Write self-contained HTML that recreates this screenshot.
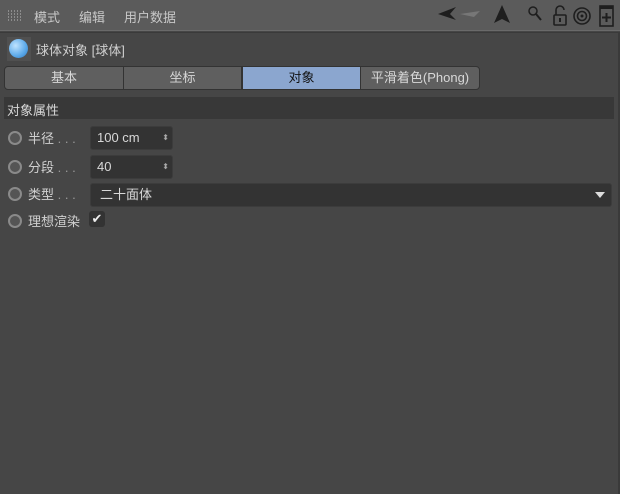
<!DOCTYPE html>
<html><head><meta charset="utf-8"><style>
*{margin:0;padding:0;box-sizing:border-box}
body{width:620px;height:494px;background:#464646;font-family:"Liberation Sans","Noto Sans CJK SC",sans-serif;font-size:12px;color:#d4d4d4;position:relative;overflow:hidden}
.abs{position:absolute}
.menu{left:0;top:0;width:620px;height:31px;background:#5b5b5b;border-bottom:1px solid #6a6a6a}
.menu span{position:absolute;top:7px;color:#c8c8c8;font-size:13px}
.tab{position:absolute;top:66px;height:24px;background:#5f5f5f;border:1px solid #333;text-align:center;line-height:22px;color:#d8d8d8;font-size:13px}
.lbl{position:absolute;left:28px;font-size:13px;color:#d0d0d0}
.radio{position:absolute;left:8px;width:14px;height:14px;border-radius:50%;border:2px solid #8a8a8a;background:#555}
.field{position:absolute;left:90px;height:24px;background:#333;border-radius:3px;border:1px solid #3c3c3c;color:#d8d8d8;font-size:13px;line-height:22px;padding-left:6px}
</style></head><body>
<div class="abs menu">
 <div class="abs" style="left:8px;top:9px;width:14px;height:13px;background:repeating-linear-gradient(90deg,#999 0 1px,transparent 1px 3px),#5b5b5b;opacity:.8"></div>
 <div class="abs" style="left:8px;top:9px;width:14px;height:13px;background:repeating-linear-gradient(0deg,#5b5b5b 0 1px,transparent 1px 3px)"></div>
 <span style="left:34px">模式</span><span style="left:79px">编辑</span><span style="left:124px">用户数据</span>
 <svg class="abs" style="left:430px;top:4px" width="190" height="26">
  <path d="M8 10 L26 3 L20 10 L26 16Z" fill="#1e1e1e"/>
  <path d="M30 10 L50 7 L44 13Z" fill="#777"/>
  <path d="M72 1 L80 19 L72 15 L64 19Z" fill="#1e1e1e"/>
  <circle cx="103" cy="7" r="4" fill="none" stroke="#1e1e1e" stroke-width="1.5"/><path d="M106 10 L111 16" stroke="#1e1e1e" stroke-width="2"/>
  <rect x="124" y="11" width="12" height="10" rx="1" fill="none" stroke="#1e1e1e" stroke-width="1.6"/><path d="M126 11 V6 a4 4 0 0 1 8 0" fill="none" stroke="#1e1e1e" stroke-width="1.6"/><rect x="129" y="14" width="2" height="4" fill="#1e1e1e"/>
  <circle cx="152" cy="12" r="8" fill="none" stroke="#1e1e1e" stroke-width="1.6"/><circle cx="152" cy="12" r="4.5" fill="none" stroke="#1e1e1e" stroke-width="1.6"/><circle cx="152" cy="12" r="1.5" fill="#1e1e1e"/>
  <rect x="170" y="2" width="13" height="20" fill="none" stroke="#1e1e1e" stroke-width="1.6"/><rect x="170" y="2" width="13" height="3" fill="#1e1e1e"/><path d="M176.5 9 V18 M172 13.5 H181" stroke="#1e1e1e" stroke-width="2"/>
 </svg>
</div>
<div class="abs" style="left:0;top:32px;width:620px;height:1px;background:#3a3a3a"></div>
<div class="abs" style="left:618px;top:33px;width:2px;height:461px;background:#3a3a3a"></div>
<div class="abs" style="left:7px;top:37px;width:24px;height:24px;background:#505050"></div>
<div class="abs" style="left:9px;top:39px;width:19px;height:19px;border-radius:50%;background:radial-gradient(circle at 35% 35%,#bfe3ff,#5aa8e8 60%,#2f77c0)"></div>
<div class="abs" style="left:36px;top:40px;font-size:13px;color:#d0d0d0">球体对象 [球体]</div>
<div class="tab" style="left:4px;width:120px;border-radius:4px 0 0 4px">基本</div>
<div class="tab" style="left:123px;width:119px">坐标</div>
<div class="tab" style="left:242px;width:119px;background:#8ba6cf;color:#111">对象</div>
<div class="tab" style="left:360px;width:120px;border-radius:0 4px 4px 0">平滑着色(Phong)</div>
<div class="abs" style="left:4px;top:97px;width:610px;height:22px;background:#383838"></div>
<div class="abs" style="left:7px;top:100px;font-size:13px;color:#d8d8d8">对象属性</div>
<div class="radio" style="top:131px"></div><div class="lbl" style="top:128px">半径 <span style="color:#999">. . .</span></div>
<div class="field" style="top:126px;width:83px">100 cm<span style="position:absolute;right:3px;top:0;font-size:8px;color:#aaa">⬍</span></div>
<div class="radio" style="top:160px"></div><div class="lbl" style="top:157px">分段 <span style="color:#999">. . .</span></div>
<div class="field" style="top:155px;width:83px">40<span style="position:absolute;right:3px;top:0;font-size:8px;color:#aaa">⬍</span></div>
<div class="radio" style="top:187px"></div><div class="lbl" style="top:184px">类型 <span style="color:#999">. . .</span></div>
<div class="field" style="top:183px;width:522px;padding-left:9px">二十面体<svg style="position:absolute;right:6px;top:8px" width="10" height="6"><path d="M0 0H10L5 6Z" fill="#ddd"/></svg></div>
<div class="radio" style="top:214px"></div><div class="lbl" style="top:211px">理想渲染</div>
<div class="abs" style="left:89px;top:211px;width:16px;height:16px;background:#333;border-radius:3px;color:#eee;font-size:13px;line-height:16px;text-align:center">✔</div>
</body></html>
